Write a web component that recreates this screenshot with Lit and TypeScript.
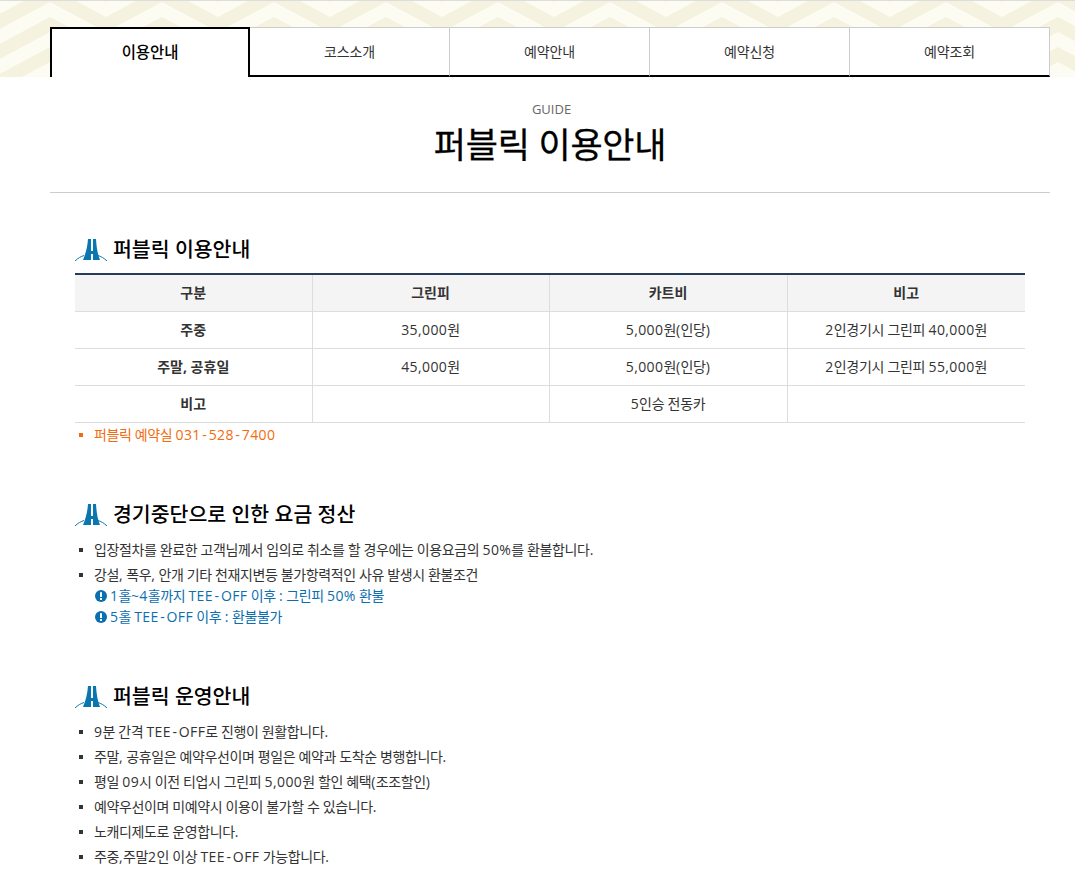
import { LitElement, html, css } from "lit";
import { customElement } from "lit/decorators.js";

const chevron = html`<svg class="pattern" width="100%" height="76" aria-hidden="true">
  <defs><pattern id="chev" x="50" y="1" width="112" height="30" patternUnits="userSpaceOnUse">
    <path fill="#f5f2df" d="M0 15L56 45L112 15V30L56 60L0 30ZM0 -15L56 15L112 -15V0L56 30L0 0Z"/>
  </pattern></defs>
  <rect width="100%" height="76" fill="#fdfcf2"/><rect width="100%" height="76" fill="url(#chev)"/>
</svg>`;

const logo = html`<svg class="logo" viewBox="0 0 32 22" width="32" height="22" aria-hidden="true">
  <path fill="#0a76b0" d="M13 0H16V12H18V0H21C21.500 8 22.500 15 25 21H18V15H16V21H8C10.500 15 12.500 8 13 0Z"/>
  <path fill="none" stroke="#0a76b0" stroke-width="1" d="M0 22C3 19 6 17.500 9 16.500M32 22C29 19 26 17.500 23 16.500"/>
</svg>`;

const alertIcon = html`<svg class="alert" viewBox="0 0 12 12" width="12" height="12" aria-hidden="true">
  <circle cx="6" cy="6" r="6" fill="#0a6fb0"/><rect x="5" y="2.200" width="2" height="4.800" fill="#fff"/><rect x="5" y="8" width="2" height="2" fill="#fff"/>
</svg>`;

/* Latin and digit runs sit a little wider than the Hangul around them; hyphens are wider still. */
const t = (s: string) =>
  s.split(/([0-9A-Za-z,.%()~:]+|-)/).map((part, i) =>
    i % 2 ? html`<span class=${part === "-" ? "l h" : "l"}>${part}</span>` : part
  );

@customElement("app-root")
export class AppRoot extends LitElement {
  static styles = css`
    :host { display: block; background: #fff; color: #333; font-family: "Open Sans", "Noto Sans CJK KR", sans-serif; font-size: 14px; height: 893px; overflow: hidden; }
    .top { position: relative; height: 77px; border-top: 1px solid #ddd; box-sizing: border-box; }
    .pattern { position: absolute; inset: 0; display: block; }
    .tabs { position: relative; display: flex; margin: 0 25px 0 50px; padding-top: 26px; height: 50px; }
    .tab { flex: 0 0 200px; box-sizing: border-box; background: #fff; display: flex; align-items: center; justify-content: center; border: 1px solid #ccc; border-left: 0; border-bottom: 2px solid #000; color: #333; font-size: 14px; letter-spacing: -0.1px; padding-bottom: 2px; }
    .tab.on { border: 2px solid #000; border-bottom: 0; color: #000; font-size: 15.500px; font-weight: 500; padding: 0 0 3px; }
    .head { margin: 0 25px 0 50px; text-align: center; border-bottom: 1px solid #ccc; height: 116px; box-sizing: border-box; padding-top: 23px; }
    .guide { font-size: 13px; color: #666; line-height: 18px; padding-left: 3px; }
    h1 { margin: 4px 0 0; font-size: 35px; font-weight: 400; color: #000; line-height: 46px; letter-spacing: -0.25px; -webkit-text-stroke: 0.3px #000; }
    .content { margin: 0 50px 0 75px; }
    h2 { display: flex; align-items: center; gap: 6px; margin: 0; font-size: 20.500px; font-weight: 500; color: #000; line-height: 30px; height: 30px; }
    .logo { display: block; margin-top: 2px; }
    .sec1 { padding-top: 41px; }
    table { width: 950px; border-collapse: collapse; table-layout: fixed; margin-top: 9px; border-top: 2px solid #243c5a; }
    th, td { height: 37px; padding: 0 0 2px; border: 1px solid #ddd; text-align: center; font-size: 14px; font-weight: 400; color: #333; box-sizing: border-box; }
    td { letter-spacing: -0.3px; }
    th { font-weight: 700; }
    thead th { background: #f4f4f4; }
    thead th:nth-child(1), thead th:nth-child(2) { width: 237px; }
    tr > :first-child { border-left: 0; }
    tr > :last-child { border-right: 0; }
    .l { letter-spacing: 0.4px; }
    .h { padding: 0 1.500px; }
    ul { list-style: none; margin: 0; padding: 0; }
    li { position: relative; padding-left: 19px; line-height: 21px; margin-bottom: 4px; font-size: 14px; color: #333; letter-spacing: -0.38px; }
    li::before { content: ""; position: absolute; left: 4px; top: 9px; width: 4px; height: 4px; background: currentColor; }
    li.orange { color: #f26b0f; margin-top: 1px; }
    .sub { display: block; color: #0a6fb0; }
    .alert { vertical-align: -1px; margin: 0 3px 0 1px; }
    .sec { padding-top: 50px; }
    .sec ul { margin-top: 10px; }
  `;

  render() {
    const tabs = ["이용안내", "코스소개", "예약안내", "예약신청", "예약조회"];
    return html`
      <div class="top">
        ${chevron}
        <nav class="tabs">${tabs.map((s, i) => html`<div class="tab ${i === 0 ? "on" : ""}">${s}</div>`)}</nav>
      </div>
      <header class="head">
        <div class="guide">GUIDE</div>
        <h1>퍼블릭 이용안내</h1>
      </header>
      <main class="content">
        <section class="sec1">
          <h2>${logo}퍼블릭 이용안내</h2>
          <table>
            <thead><tr><th>구분</th><th>그린피</th><th>카트비</th><th>비고</th></tr></thead>
            <tbody>
              <tr><th>주중</th><td>${t("35,000원")}</td><td>${t("5,000원(인당)")}</td><td>${t("2인경기시 그린피 40,000원")}</td></tr>
              <tr><th>주말, 공휴일</th><td>${t("45,000원")}</td><td>${t("5,000원(인당)")}</td><td>${t("2인경기시 그린피 55,000원")}</td></tr>
              <tr><th>비고</th><td></td><td>${t("5인승 전동카")}</td><td></td></tr>
            </tbody>
          </table>
          <ul><li class="orange">${t("퍼블릭 예약실 031-528-7400")}</li></ul>
        </section>
        <section class="sec">
          <h2>${logo}경기중단으로 인한 요금 정산</h2>
          <ul>
            <li>${t("입장절차를 완료한 고객님께서 임의로 취소를 할 경우에는 이용요금의 50%를 환불합니다.")}</li>
            <li>${t("강설, 폭우, 안개 기타 천재지변등 불가항력적인 사유 발생시 환불조건")}
              <span class="sub">${alertIcon}${t("1홀~4홀까지 TEE-OFF 이후 : 그린피 50% 환불")}</span>
              <span class="sub">${alertIcon}${t("5홀 TEE-OFF 이후 : 환불불가")}</span>
            </li>
          </ul>
        </section>
        <section class="sec">
          <h2>${logo}퍼블릭 운영안내</h2>
          <ul>
            <li>${t("9분 간격 TEE-OFF로 진행이 원활합니다.")}</li>
            <li>${t("주말, 공휴일은 예약우선이며 평일은 예약과 도착순 병행합니다.")}</li>
            <li>${t("평일 09시 이전 티업시 그린피 5,000원 할인 혜택(조조할인)")}</li>
            <li>${t("예약우선이며 미예약시 이용이 불가할 수 있습니다.")}</li>
            <li>${t("노캐디제도로 운영합니다.")}</li>
            <li>${t("주중,주말2인 이상 TEE-OFF 가능합니다.")}</li>
          </ul>
        </section>
      </main>
    `;
  }
}
